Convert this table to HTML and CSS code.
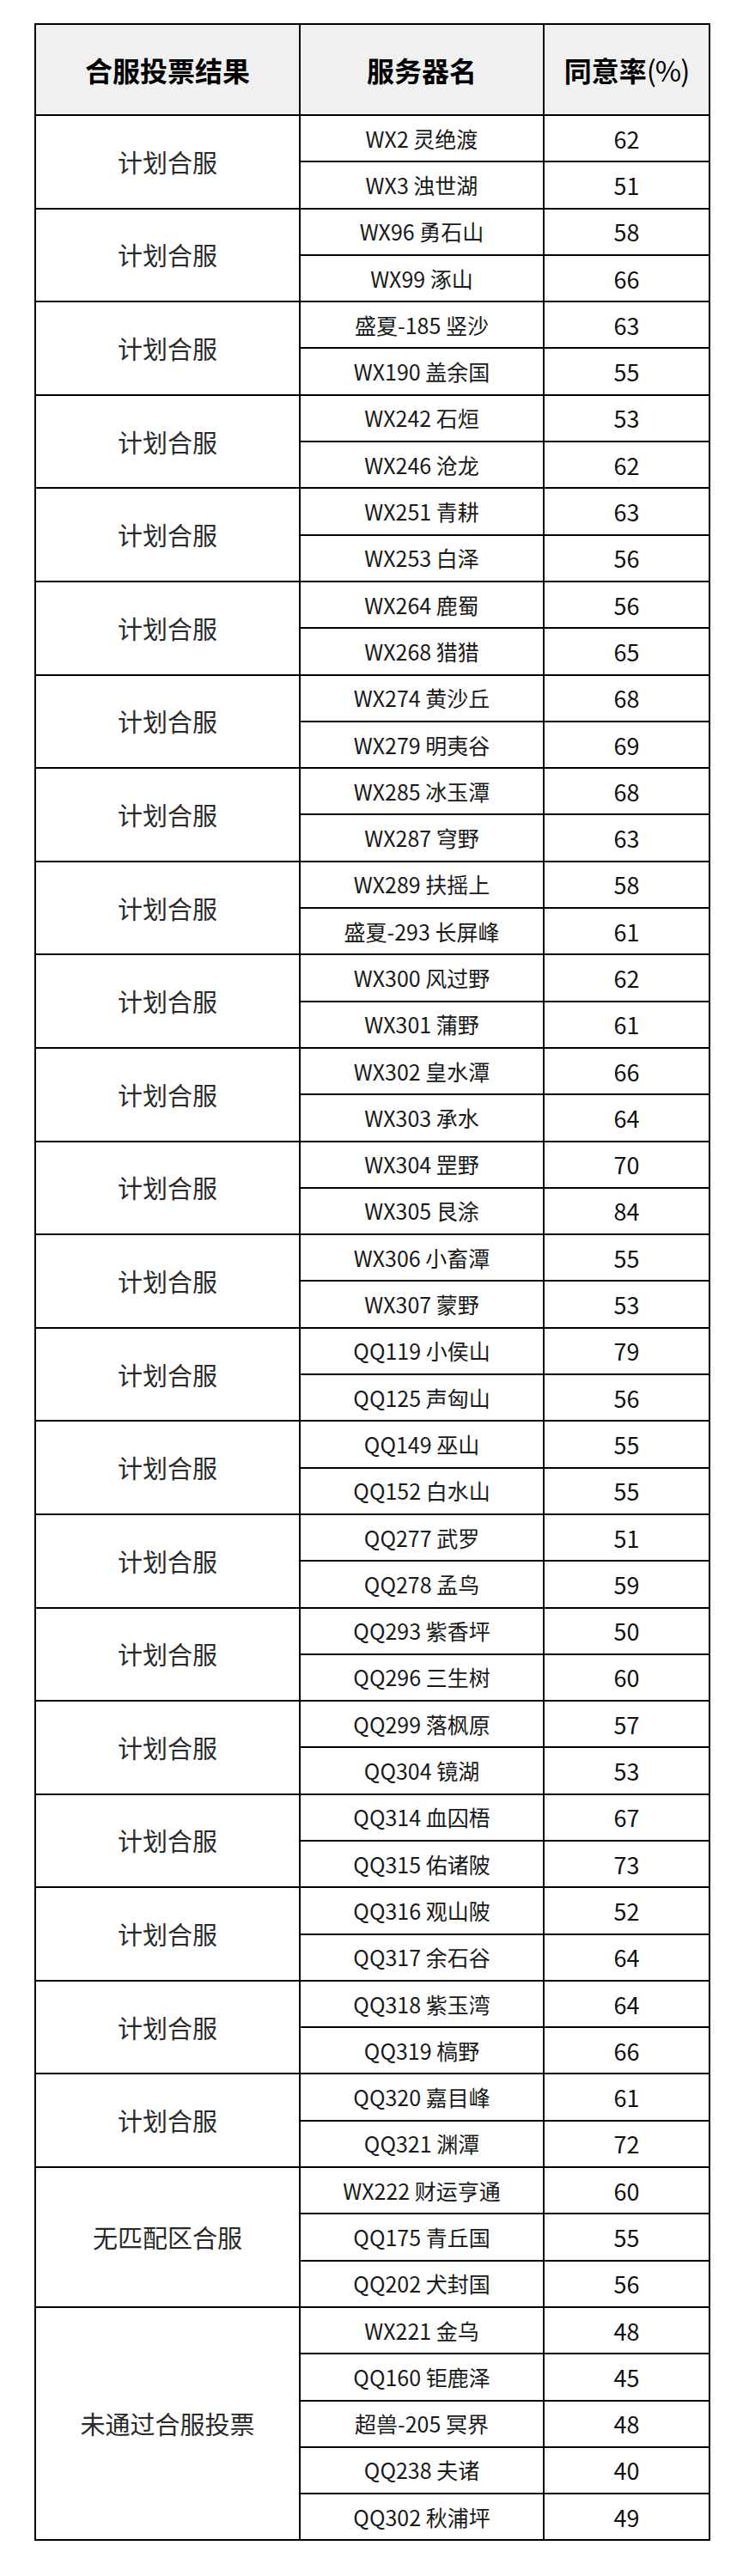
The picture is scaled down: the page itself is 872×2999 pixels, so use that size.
FILE: index.html
```html
<!DOCTYPE html>
<html lang="zh-CN">
<head>
<meta charset="utf-8">
<title>合服投票结果</title>
<link rel="stylesheet" href="styles.css">
</head>
<body>
<table class="vote">
  <colgroup>
    <col class="c1"><col class="c2"><col class="c3">
  </colgroup>
  <thead>
    <tr class="head"><th>合服投票结果</th><th>服务器名</th><th>同意率<span class="pct">(%)</span></th></tr>
  </thead>
  <tbody id="body"></tbody>
</table>
<script src="app.js"></script>
</body>
</html>
```

FILE: app.js
```js
const groups = [
  ["计划合服", [["WX2 灵绝渡", 62], ["WX3 浊世湖", 51]]],
  ["计划合服", [["WX96 勇石山", 58], ["WX99 涿山", 66]]],
  ["计划合服", [["盛夏-185 竖沙", 63], ["WX190 盖余国", 55]]],
  ["计划合服", [["WX242 石烜", 53], ["WX246 沧龙", 62]]],
  ["计划合服", [["WX251 青耕", 63], ["WX253 白泽", 56]]],
  ["计划合服", [["WX264 鹿蜀", 56], ["WX268 猎猎", 65]]],
  ["计划合服", [["WX274 黄沙丘", 68], ["WX279 明夷谷", 69]]],
  ["计划合服", [["WX285 冰玉潭", 68], ["WX287 穹野", 63]]],
  ["计划合服", [["WX289 扶摇上", 58], ["盛夏-293 长屏峰", 61]]],
  ["计划合服", [["WX300 风过野", 62], ["WX301 蒲野", 61]]],
  ["计划合服", [["WX302 皇水潭", 66], ["WX303 承水", 64]]],
  ["计划合服", [["WX304 罡野", 70], ["WX305 艮涂", 84]]],
  ["计划合服", [["WX306 小畜潭", 55], ["WX307 蒙野", 53]]],
  ["计划合服", [["QQ119 小侯山", 79], ["QQ125 声匈山", 56]]],
  ["计划合服", [["QQ149 巫山", 55], ["QQ152 白水山", 55]]],
  ["计划合服", [["QQ277 武罗", 51], ["QQ278 孟鸟", 59]]],
  ["计划合服", [["QQ293 紫香坪", 50], ["QQ296 三生树", 60]]],
  ["计划合服", [["QQ299 落枫原", 57], ["QQ304 镜湖", 53]]],
  ["计划合服", [["QQ314 血囚梧", 67], ["QQ315 佑诸陂", 73]]],
  ["计划合服", [["QQ316 观山陂", 52], ["QQ317 余石谷", 64]]],
  ["计划合服", [["QQ318 紫玉湾", 64], ["QQ319 槁野", 66]]],
  ["计划合服", [["QQ320 嘉目峰", 61], ["QQ321 渊潭", 72]]],
  ["无匹配区合服", [["WX222 财运亨通", 60], ["QQ175 青丘国", 55], ["QQ202 犬封国", 56]]],
  ["未通过合服投票", [["WX221 金乌", 48], ["QQ160 钜鹿泽", 45], ["超兽-205 冥界", 48], ["QQ238 夫诸", 40], ["QQ302 秋浦坪", 49]]]
];
const body = document.getElementById("body");
groups.forEach(([label, rows], gi) => {
  rows.forEach(([name, rate], i) => {
    const tr = document.createElement("tr");
    tr.className = "row";
    if (i === 0) {
      const g = document.createElement("td");
      g.className = gi === groups.length - 1 ? "group last" : "group";
      g.rowSpan = rows.length;
      g.textContent = label;
      tr.appendChild(g);
    }
    const n = document.createElement("td");
    n.className = "name";
    n.textContent = name;
    const r = document.createElement("td");
    r.className = "rate";
    r.textContent = rate;
    tr.appendChild(n);
    tr.appendChild(r);
    body.appendChild(tr);
  });
});
```

FILE: styles.css
```css
html, body {
  margin: 0;
  padding: 0;
  background: #ffffff;
}
body {
  padding: 27px 0 0 40px;
  font-family: "Noto Sans CJK SC", "Noto Sans", sans-serif;
  color: #1c1c1c;
}
.vote {
  border-collapse: collapse;
  table-layout: fixed;
  width: 785px;
}
.c1 { width: 308px; }
.c2 { width: 284px; }
.c3 { width: 193px; }
.vote th,
.vote td {
  border: 2px solid #000;
  padding: 0;
  text-align: center;
  vertical-align: middle;
  line-height: 1;
}
.head {
  height: 106px;
}
.head th {
  background: #f0f0f0;
  font-size: 32px;
  font-weight: 700;
  color: #000;
}
.pct {
  font-weight: 400;
  font-size: 33px;
  letter-spacing: -1px;
}
.row {
  height: 54.3px;
}
.group {
  font-size: 29px;
  color: #2a2a2a;
}
.name {
  font-size: 25px;
  color: #1a1a1a;
}
.rate {
  font-size: 27px;
  color: #111;
}
```
